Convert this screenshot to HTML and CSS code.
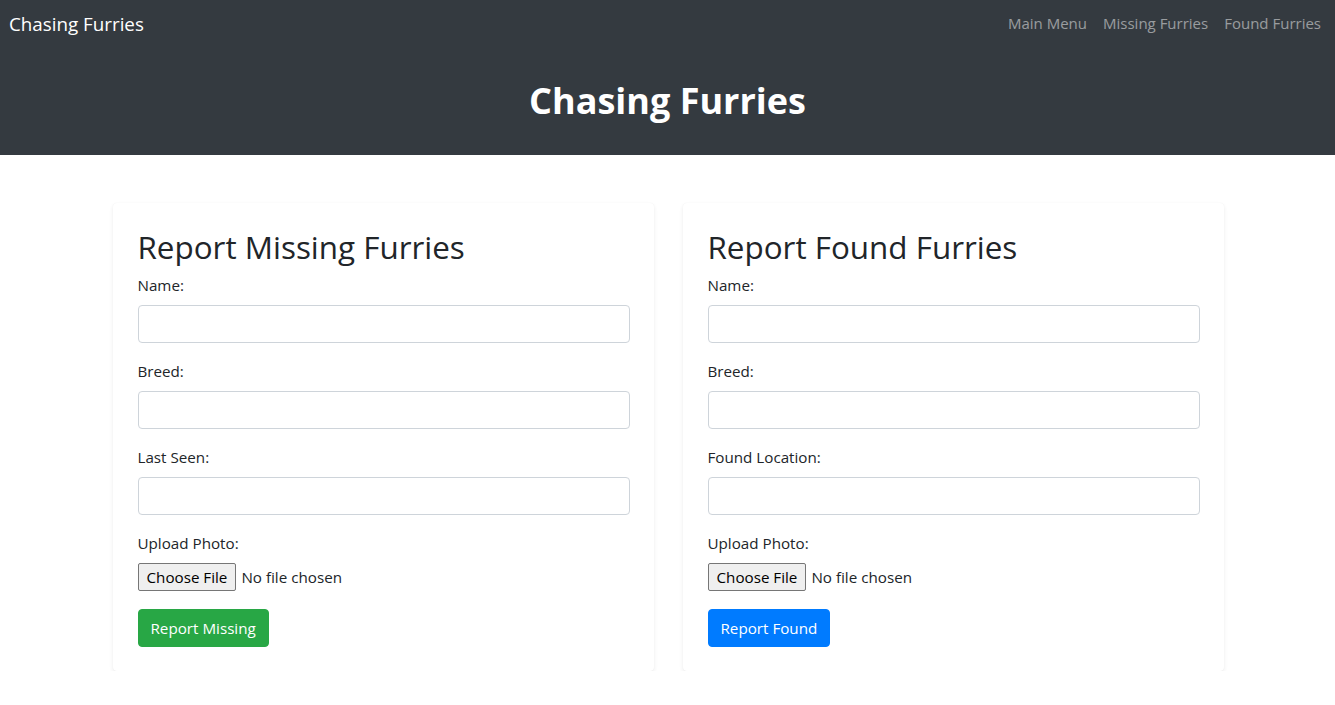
FILE: index.html
```html
<!DOCTYPE html>
<html lang="en">
<head>
<meta charset="utf-8">
<title>Chasing Furries</title>
<link rel="stylesheet" href="styles.css">
</head>
<body>
<header class="site-header">
  <nav class="topnav">
    <a class="brand" href="#">Chasing Furries</a>
    <ul class="nav-links">
      <li><a href="#">Main Menu</a></li>
      <li><a href="#">Missing Furries</a></li>
      <li><a href="#">Found Furries</a></li>
    </ul>
  </nav>
  <h1 class="page-title">Chasing Furries</h1>
</header>
<main class="container">
  <section class="card">
    <h2 class="card-title">Report Missing Furries</h2>
    <form class="report-form">
      <div class="form-group">
        <label>Name:</label>
        <input class="form-control" type="text">
      </div>
      <div class="form-group">
        <label>Breed:</label>
        <input class="form-control" type="text">
      </div>
      <div class="form-group">
        <label>Last Seen:</label>
        <input class="form-control" type="text">
      </div>
      <div class="form-group">
        <label>Upload Photo:</label>
        <input class="form-file" type="file">
      </div>
      <button class="btn btn-success" type="button">Report Missing</button>
    </form>
  </section>
  <section class="card">
    <h2 class="card-title">Report Found Furries</h2>
    <form class="report-form">
      <div class="form-group">
        <label>Name:</label>
        <input class="form-control" type="text">
      </div>
      <div class="form-group">
        <label>Breed:</label>
        <input class="form-control" type="text">
      </div>
      <div class="form-group">
        <label>Found Location:</label>
        <input class="form-control" type="text">
      </div>
      <div class="form-group">
        <label>Upload Photo:</label>
        <input class="form-file" type="file">
      </div>
      <button class="btn btn-primary" type="button">Report Found</button>
    </form>
  </section>
</main>
</body>
</html>
```
FILE: styles.css
```css
* { box-sizing: border-box; }
html, body {
  margin: 0;
  padding: 0;
}
body {
  font-family: "Open Sans", "Noto Sans", sans-serif;
  font-size: 15.2px;
  line-height: 24px;
  color: #212529;
  background: #fff;
}
.site-header {
  background: #343a40;
  height: 155px;
  display: flex;
  flex-direction: column;
}
.topnav {
  height: 48px;
  display: flex;
  align-items: center;
  justify-content: space-between;
  padding: 0 6px 0 9px;
}
.brand {
  color: #fff;
  text-decoration: none;
  font-size: 18.8px;
  line-height: 30px;
}
.nav-links {
  list-style: none;
  margin: 0 0 2px;
  padding: 0;
  display: flex;
}
.nav-links a {
  display: block;
  padding: 0 8px;
  color: rgba(255, 255, 255, 0.5);
  text-decoration: none;
  font-size: 15px;
  line-height: 24px;
}
.page-title {
  margin: 33px 0 0;
  text-align: center;
  color: #fff;
  font-size: 36px;
  font-weight: 700;
  line-height: 40px;
}
.container {
  width: 1112px;
  margin: 48px auto 0;
  padding-left: 1px;
  display: grid;
  grid-template-columns: 1fr 1fr;
  gap: 29px;
}
.card {
  background: #fff;
  border-radius: 4px;
  padding: 25px 24px 24px 25px;
  box-shadow: 0 2px 4px rgba(0, 0, 0, 0.075), 0 0 1px rgba(0, 0, 0, 0.06);
}
.card-title {
  margin: 0 0 7px;
  font-size: 31.4px;
  font-weight: 500;
  line-height: 38px;
}
.form-group {
  margin-bottom: 16px;
}
.form-group label {
  display: block;
  margin-bottom: 8px;
  line-height: 24px;
}
.form-control {
  display: block;
  width: 100%;
  height: 38px;
  padding: 6px 12px;
  font: inherit;
  color: #495057;
  background: #fff;
  border: 1px solid #ced4da;
  border-radius: 4px;
}
.form-file {
  display: block;
  width: 100%;
  height: 30px;
  font: inherit;
  color: #212529;
}
.form-file::file-selector-button {
  font: inherit;
  height: 28px;
  padding: 0 8px;
  margin-right: 5px;
  color: #000;
  background: #efefef;
  border: 1px solid #767676;
  border-radius: 2px;
}
.btn {
  display: inline-block;
  height: 38px;
  padding: 6px 12px;
  font: inherit;
  line-height: 24px;
  color: #fff;
  border: 1px solid transparent;
  border-radius: 4px;
}
.btn-success { background: #28a745; border-color: #28a745; }
.btn-primary { background: #007bff; border-color: #007bff; }
```
